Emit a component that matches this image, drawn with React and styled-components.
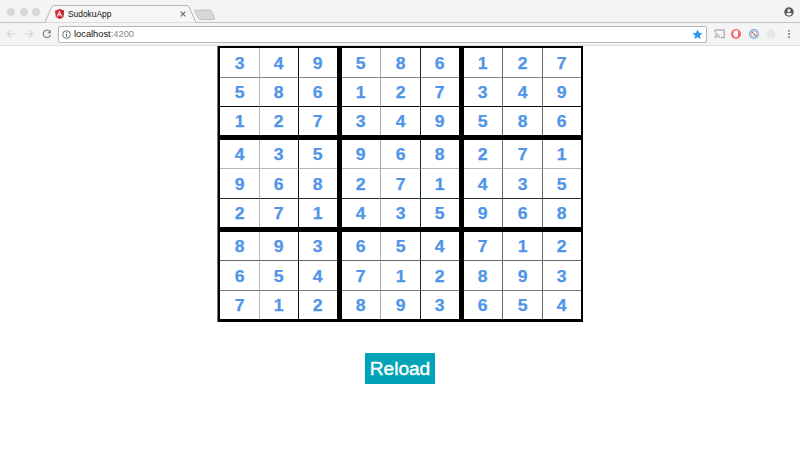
import React from "react";
import styled, { createGlobalStyle } from "styled-components";

const GlobalStyle = createGlobalStyle`
  * { box-sizing: border-box; }
  body { margin: 0; background: #fff; font-family: "Liberation Sans", Arial, sans-serif; overflow: hidden; }
`;

const Window = styled.div`
  display: flex;
  flex-direction: column;
  height: 451px;
  background: #fff;
`;

const TabStrip = styled.header`
  display: flex;
  height: 23px;
  background: #f4f4f4;
  box-shadow: inset 0 -1px #c4c4c4;
`;

const Lights = styled.div`
  display: flex;
  gap: 4.5px;
  padding: 8px 0 0 7px;
  width: 45px;
`;

const Light = styled.i`
  width: 8px;
  height: 8px;
  border-radius: 50%;
  background: #d8d8d8;
`;

const Tab = styled.div`
  display: grid;
  width: 152px;
  height: 23px;
  > * { grid-area: 1 / 1; }
`;

const TabContent = styled.div`
  display: flex;
  align-items: center;
  padding: 5px 11px 0 10px;
  font-size: 8.4px;
  color: #111;
  gap: 4px;
`;

const TabTitle = styled.span`
  flex: 1;
`;

const NewTab = styled.svg`
  margin: 9px 0 0 -3px;
`;

const Profile = styled.svg`
  margin: 7px 6px 0 auto;
`;

const Toolbar = styled.div`
  display: flex;
  align-items: center;
  height: 23px;
  padding: 0 5px 0 6px;
  background: #f4f4f4;
  border-bottom: 1px solid #dedede;
`;

const NavIcons = styled.div`
  display: flex;
  gap: 7px;
  width: 52px;
`;

const AddressBar = styled.div`
  display: flex;
  align-items: center;
  width: 649px;
  height: 17px;
  padding: 0 3px;
  border: 1px solid #b5b5b5;
  border-radius: 2px;
  background: #fff;
  font-size: 9.3px;
`;

const Url = styled.span`
  flex: 1;
  margin-left: 3px;
  color: #111;
`;

const Port = styled.span`
  color: #888;
`;

const Extensions = styled.div`
  display: flex;
  align-items: center;
  margin-left: 6.5px;
  gap: 5.5px;
`;

const Page = styled.main`
  display: flex;
  flex-direction: column;
  align-items: center;
`;

const Board = styled.div`
  display: grid;
  grid-template-columns: repeat(3, 117px);
  grid-template-rows: repeat(3, 87px);
  gap: 5px;
  width: 366px;
  height: 276px;
  padding: 2px 2px 3px 2px;
  border-left: 1px solid #777;
  background: #000;
`;

const Box = styled.div`
  display: grid;
  grid-template-columns: ${(p) => p.$columns};
  grid-template-rows: ${(p) => p.$rows};
`;

const Cell = styled.div`
  display: flex;
  align-items: center;
  justify-content: center;
  border: 0 solid;
  border-right: ${(p) => (p.$right ? `1px solid ${p.$right}` : 0)};
  border-bottom: ${(p) => (p.$bottom ? `1px solid ${p.$bottom}` : 0)};
  background: #fff;
  color: #5195e9;
  font-size: 16.3px;
  font-weight: 700;
  line-height: 18px;
`;

const Digit = styled.span`
  transform: scaleX(1.08);
  -webkit-text-stroke: 0.25px #5195e9;
`;

const ReloadButton = styled.button`
  width: 70px;
  height: 31px;
  margin-top: 31px;
  padding: 0;
  border: 0;
  background: #00a4b6;
  color: #fff;
  font: 19.1px/31px "Liberation Sans", Arial, sans-serif;
  -webkit-text-stroke: 0.4px #fff;
`;

const rows = [
  "349586127", "586127349", "127349586",
  "435968271", "968271435", "271435968",
  "893654712", "654712893", "712893654",
];

// Track sizes include the one-pixel rule that follows the first two cells.
const boxColumns = [
  { tracks: "40px 39px 38px", rules: ["#b4b9b4", "#071007"] },
  { tracks: "39px 40px 38px", rules: ["#a8aea8", "#1c2c22"] },
  { tracks: "39px 40px 38px", rules: ["#5f6f64", "#5f6f64"] },
];
const boxRows = [
  { tracks: "30px 29px 28px", rules: ["#858985", "#071007"] },
  { tracks: "29px 30px 28px", rules: ["#b0bab0", "#1c2c22"] },
  { tracks: "29px 30px 28px", rules: ["#5f6a60", "#737d73"] },
];

function AngularLogo() {
  return (
    <svg width="9" height="10" viewBox="0 0 18 20">
      <path d="M9 0 18 3.4 16.5 16 9 20 1.5 16 0 3.4Z" fill="#df2938" />
      <path d="M9 0 18 3.4 16.5 16 9 20Z" fill="#bd2534" />
      <path d="M9 3 14.5 15H12.2L11.1 12.3H6.9L5.8 15H3.5ZM9 7.2 7.7 10.4H10.3Z" fill="#fff" />
    </svg>
  );
}

function SudokuBox({ index }) {
  const top = Math.floor(index / 3) * 3;
  const left = (index % 3) * 3;
  const columns = boxColumns[index % 3];
  const lines = boxRows[top / 3];
  const digits = rows.slice(top, top + 3).flatMap((r) => [...r.slice(left, left + 3)]);
  return (
    <Box $columns={columns.tracks} $rows={lines.tracks}>
      {digits.map((d, i) => (
        <Cell key={i} $right={columns.rules[i % 3]} $bottom={lines.rules[Math.floor(i / 3)]}>
          <Digit>{d}</Digit>
        </Cell>
      ))}
    </Box>
  );
}

export default function App() {
  return (
    <Window>
      <GlobalStyle />
      <TabStrip>
        <Lights><Light /><Light /><Light /></Lights>
        <Tab>
          <svg width="152" height="23" fill="none">
            <path d="M0 22.5 6.5 7Q7.2 5.5 8.5 5.5H142Q143.5 5.5 144 7L151 22.5" fill="#f6f6f6" />
            <path d="M0 22.5 6.5 7Q7.2 5.5 8.5 5.5H142Q143.5 5.5 144 7L151 22.5" stroke="#b5b5b5" />
          </svg>
          <TabContent>
            <AngularLogo />
            <TabTitle>SudokuApp</TabTitle>
            <svg width="6" height="6" stroke="#666" strokeWidth="1.1"><path d="M.7.7 5.3 5.3M5.3.7.7 5.3" /></svg>
          </TabContent>
        </Tab>
        <NewTab width="23" height="12">
          <path d="M1.5 1H15.5Q17 1 17.6 2.3L20.5 9Q21 10.5 19.5 10.5H6.5Q5 10.5 4.3 9L.8 2.3Q.2 1 1.5 1Z" fill="#d8d8d8" stroke="#b9b9b9" strokeWidth=".8" />
        </NewTab>
        <Profile width="10" height="10" viewBox="0 0 20 20">
          <circle cx="10" cy="10" r="9.5" fill="#5a5a5a" />
          <circle cx="10" cy="6.8" r="3" fill="#f4f4f4" />
          <path d="M4 13.5Q10 9 16 13.5 14 17.2 10 17.2T4 13.5Z" fill="#f4f4f4" />
        </Profile>
      </TabStrip>
      <Toolbar>
        <NavIcons>
          <svg width="11" height="10" fill="none" stroke="#d5d5d5" strokeWidth="1.2"><path d="M9.5 5H1.5M5 1.3 1.3 5 5 8.7" /></svg>
          <svg width="11" height="10" fill="none" stroke="#d5d5d5" strokeWidth="1.2"><path d="M.5 5H8.5M5 1.3 8.7 5 5 8.7" /></svg>
          <svg width="10" height="10" fill="none" stroke="#858585" strokeWidth="1.3"><path d="M7.8 2.4A3.7 3.7 0 1 0 8.5 6" /><path d="M8.8.8V4.4H5.2Z" fill="#858585" stroke="none" /></svg>
        </NavIcons>
        <AddressBar>
          <svg width="9" height="9" fill="none" stroke="#5c5c5c"><circle cx="4.5" cy="4.5" r="3.8" strokeWidth=".9" /><path d="M4.5 4V6.8M4.5 2.2V3.2" /></svg>
          <Url>localhost<Port>:4200</Port></Url>
          <svg width="11" height="11" viewBox="0 0 20 20"><path d="m10 1 2.7 6 6.5.6-4.9 4.3 1.4 6.5L10 15l-5.7 3.4 1.4-6.5L.8 7.6 7.3 7Z" fill="#3196f0" /></svg>
        </AddressBar>
        <Extensions>
          <svg width="11" height="10" fill="none" stroke="#8b8b8b" strokeWidth=".9"><path d="M1 3V1H10.2V8.6H6.5M1 4.3A4.3 4.3 0 0 1 5.3 8.6M1 6.3A2.3 2.3 0 0 1 3.3 8.6" /><circle cx="1.3" cy="8.2" r=".6" fill="#8b8b8b" stroke="none" /></svg>
          <svg width="12" height="12"><circle cx="6" cy="6" r="5" fill="#f5686b" /><path d="M3.7 5V3.5L5 2.5 6.5 2 8 3V7.5L7 9.3H5L3 6.5Z" fill="#fff" /></svg>
          <svg width="12" height="12" fill="none"><circle cx="6" cy="6" r="4.4" stroke="#69addb" strokeWidth="1.3" /><circle cx="6" cy="6" r="3" stroke="#e2a2a2" strokeWidth=".9" /><path d="M3.7 3.7 8.3 8.3" stroke="#8f8080" strokeWidth="1.1" /></svg>
          <svg width="12" height="12" fill="none" stroke="#dedede" strokeWidth=".8"><ellipse cx="6" cy="6" rx="5" ry="2" /><ellipse cx="6" cy="6" rx="5" ry="2" transform="rotate(60 6 6)" /><ellipse cx="6" cy="6" rx="5" ry="2" transform="rotate(120 6 6)" /><circle cx="6" cy="6" r=".7" /></svg>
          <svg width="12" height="12" fill="#666"><circle cx="6" cy="2.8" r=".9" /><circle cx="6" cy="6" r=".9" /><circle cx="6" cy="9.2" r=".9" /></svg>
        </Extensions>
      </Toolbar>
      <Page>
        <Board>{Array.from({ length: 9 }, (_, i) => <SudokuBox key={i} index={i} />)}</Board>
        <ReloadButton>Reload</ReloadButton>
      </Page>
    </Window>
  );
}
